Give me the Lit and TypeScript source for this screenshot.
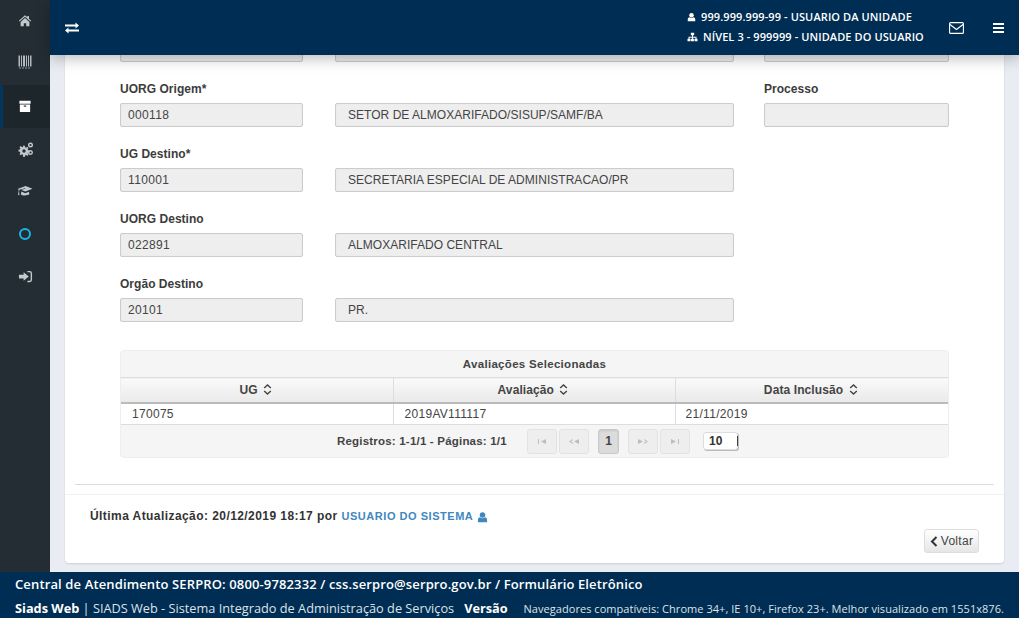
import { LitElement, html, css, svg } from "lit";
import { customElement } from "lit/decorators.js";

const I = {
  home: svg`<path d="M8 1.5 1 7.6l.8.9L8 3.2l6.2 5.3.8-.9-2.5-2.2V2.2h-1.800v1.600zM3 9v5h3.600v-3.400h2.800V14H13V9L8 4.700z"/>`,
  barcode: svg`<path d="M1.500 2.500h1.500v11H1.500zM4 2.500h1v11H4zM6 2.500h2v11H6zM9 2.500h1v11H9zM11 2.500h1v11h-1zM13 2.500h1.500v11H13z" opacity=".9"/><path d="M2 14.500h2v1H2zM5 14.500h2v1H5zM8 14.500h2v1H8zM11 14.500h2v1h-2z" opacity=".7"/>`,
  box: svg`<path d="M1 2h12v3H1zM1.500 6h11v8h-11z"/><rect x="5.700" y="7" width="2.600" height="1.200" fill="#1d262b"/>`,
  gears: svg`<path fill-rule="evenodd" d="M6.200 4.500 7.800 4.800 8 6.200l1.200.5 1.100-.9 1.200 1.200-.9 1.100.5 1.200 1.400.2v1.700l-1.400.2-.5 1.200.9 1.100-1.200 1.200-1.100-.9-1.200.5-.2 1.400H6.200L6 13.800l-1.200-.5-1.100.9-1.200-1.200.9-1.100-.5-1.200-1.400-.2V8.800l1.400-.2.5-1.200-.9-1.100 1.200-1.200 1.100.9L6 6.200zM7 8.300a1.700 1.700 0 1 0 0 3.400 1.700 1.700 0 0 0 0-3.400z"/><path fill-rule="evenodd" d="M13.500 1.500a2.500 2.500 0 1 0 0 5 2.500 2.500 0 0 0 0-5zm0 1.400a1.100 1.100 0 1 1 0 2.200 1.100 1.100 0 0 1 0-2.200zM13.500 9a2.500 2.500 0 1 0 0 5 2.500 2.500 0 0 0 0-5zm0 1.400a1.100 1.100 0 1 1 0 2.200 1.100 1.100 0 0 1 0-2.200z"/>`,
  grad: svg`<path d="M0.500 6 8.500 3l7 2.700-7.200 2.800-4.300-1.700 4.400-1-.2-.5-5.500 1.200-.7 2.300.6 3-1.500.4.400-3.300.3-2.100zM4.300 8.600l4 1.600 3.700-1.400.3 2.500c-1.300 1.200-6.500 1.800-8.300.2z"/>`,
  signin: svg`<path d="M10 2h2.500A2.500 2.500 0 0 1 15 4.500v7a2.500 2.500 0 0 1-2.500 2.500H10v-1.500h2.500a1 1 0 0 0 1-1v-7a1 1 0 0 0-1-1H10z"/><path d="M6 3.500 11.500 8 6 12.500V10H1V6h5z"/>`,
  user: svg`<circle cx="6" cy="3.800" r="3"/><path d="M1 11.800V9.200C1 7.600 2 6.500 3.300 6.300 4 7 5 7.400 6 7.400s2-.4 2.700-1.100C10 6.500 11 7.600 11 9.200v2.600z"/>`,
  net: svg`<path d="M4.500 1h4v3h-1.400v1.800h4.200V8H12.500v3h-3.600V8h1.300V6.900H6.900V8h1.300v3H4.600V8h1.300V6.900H2.800V8H4v3H.5V8h1.200V5.800h4.200V4H4.500z"/>`,
};

const ico = (name: keyof typeof I, w: number, h: number, vb: string) => html`<svg width=${w} height=${h} viewBox=${vb} fill="currentColor">${I[name]}</svg>`;
const sort = html`<svg class="sort" width="9" height="11" viewBox="0 0 9 11" fill="none" stroke="currentColor" stroke-width="1.400"><path d="M1.200 4 4.500 1l3.300 3M1.200 7l3.300 3 3.300-3"/></svg>`;

const rows = [
  { label: "\u00a0", code: "", desc: "", extraLabel: "", extra: true },
  { label: "UORG Origem*", code: "000118", desc: "SETOR DE ALMOXARIFADO/SISUP/SAMF/BA", extraLabel: "Processo", extra: true },
  { label: "UG Destino*", code: "110001", desc: "SECRETARIA ESPECIAL DE ADMINISTRACAO/PR" },
  { label: "UORG Destino", code: "022891", desc: "ALMOXARIFADO CENTRAL" },
  { label: "Orgão Destino", code: "20101", desc: "PR." },
];

@customElement("app-root")
export class AppRoot extends LitElement {
  static styles = css`
    :host { display: block; width: 1019px; height: 618px; overflow: hidden; position: relative; font-family: "Liberation Sans", Arial, sans-serif; color: #333; }
    * { box-sizing: border-box; }
    .top { display: flex; height: 572px; background: #e9edf3; }
    .side { width: 50px; flex: none; background: #232d33; display: flex; flex-direction: column; color: #c3cacf; }
    .si { height: 42.5px; display: flex; align-items: center; justify-content: center; }
    .si.active { background: #1d262b; border-left: 3px solid #003660; padding-right: 3px; color: #fff; }
    .si.circle { color: #19b5e6; }
    .ring { width: 12px; height: 12px; border: 2px solid currentColor; border-radius: 50%; }
    .main { flex: 1; min-width: 0; display: flex; flex-direction: column; position: relative; }
    .head { height: 55px; flex: none; background: #002d53; color: #fff; display: flex; align-items: center; padding: 0 15px; position: relative; z-index: 2; box-shadow: 0 3px 14px rgba(0,0,0,.28); }
    .who { margin-left: auto; font: 600 11px/20px "Open Sans", sans-serif; display: flex; flex-direction: column; letter-spacing: .1px; width: 237px; flex: none; margin-top: -1px; }
    .who div { display: flex; align-items: center; gap: 5px; white-space: nowrap; }
    .mail { margin-left: 25px; margin-right: 29px; display: block; }
    .content { flex: 1; min-height: 0; overflow: hidden; padding: 0 15px; }
    .card { background: #fff; height: 566px; margin-top: -58px; border-radius: 0 0 4px 4px; box-shadow: 0 1px 2px rgba(0,0,0,.12); display: flex; flex-direction: column; }
    .form { display: grid; grid-template-columns: 215px 429px 185px; padding: 0 0 0 55px; grid-auto-rows: 65px; }
    .lab { font-size: 12px; font-weight: 700; line-height: 14px; height: 14px; margin-top: 20px; margin-bottom: 7px; letter-spacing: .03px; color: #3c3c3c; white-space: nowrap; }
    .inp { height: 24px; background: #eee; border: 1px solid #ccc; border-radius: 2px; font-size: 12px; line-height: 22px; padding: 0 7px; color: #444; box-shadow: inset 0 0 1px rgba(0,0,0,.1); }
    .c1 .inp { width: 183px; letter-spacing: .35px; }
    .c2 .inp { width: 399px; padding-left: 12px; letter-spacing: .03px; }
    .c2 .lab { visibility: hidden; }
    .panel { margin: 28px 55px 0; border: 1px solid #eee; border-radius: 4px; background: #f5f5f5; font-size: 12px; }
    .ttl { height: 26px; text-align: center; font-weight: 700; font-size: 11.5px; line-height: 27px; letter-spacing: .3px; color: #444; }
    table { width: 100%; border-collapse: collapse; table-layout: fixed; }
    .col1 { width: 272px; }
    .col2 { width: 282px; }
    th { height: 25px; background: linear-gradient(#fafafa, #e9e9e9); border-top: 1px solid #ddd; border-bottom: 2px solid #bbb; border-left: 1px solid #ddd; font-size: 12px; font-weight: 700; letter-spacing: .1px; color: #444; padding: 0 2px 0 0; }
    th:first-child, td:first-child { border-left: none; }
    .sort { margin-left: 2px; vertical-align: -1px; color: #444; }
    td { height: 22px; background: #fff; border-left: 1px solid #ddd; border-bottom: 1px solid #ddd; padding: 1px 10px 0; font-size: 12px; letter-spacing: .3px; color: #444; }
    td:first-child, td:nth-child(2) { padding-left: 11px; }
    .pager { height: 32px; display: flex; align-items: center; color: #444; font-size: 11.5px; font-weight: 700; }
    .reg { margin-left: 216px; width: 190px; letter-spacing: .2px; white-space: nowrap; }
    .pb { width: 30px; height: 25px; margin-right: 2px; background: #eee; border: 1px solid #e2e2e2; border-radius: 3px; color: #bdbdbd; display: flex; align-items: center; justify-content: center; }
    .pb svg { display: block; }
    .pb.cur { width: 21px; margin: 0 9px 0 7px; background: #dcdcdc; border-color: #c9c9c9; color: #444; font-size: 12px; box-shadow: inset 0 1px 2px rgba(0,0,0,.1); }
    .sel { margin-left: 11px; width: 35px; height: 18px; background: #fff; border: 1px solid #ddd; border-radius: 3px; padding-left: 5px; line-height: 16px; font-size: 12px; color: #333; position: relative; box-shadow: 1px 1px 0 #bbb; }
    .sel::after { content: ""; position: absolute; right: -1px; top: 3px; width: 1px; height: 10px; background: #444; }
    hr { margin: 26px 10px 0; border: 0; border-top: 1px solid #ddd; height: 0; }
    .sep { margin-top: 9px; border-top: 1px solid #f2f2f2; }
    .upd { padding: 14px 25px 0; font-size: 12px; line-height: 15px; font-weight: 700; letter-spacing: .43px; color: #333; display: flex; align-items: center; gap: 4px; }
    .upd a { color: #3f88bf; font-size: 11px; letter-spacing: .53px; }
    .upd svg { color: #3f88bf; }
    .act { display: flex; justify-content: flex-end; padding: 5px 25px 0; }
    .back { width: 55px; height: 24px; background: linear-gradient(#fff, #e6e6e6); border: 1px solid #ddd; border-radius: 3px; font-size: 12px; letter-spacing: .3px; color: #444; display: flex; align-items: center; justify-content: center; gap: 3px; }
    .foot { height: 46px; background: #002d53; color: #fff; font-family: "Open Sans", sans-serif; padding: 3px 15px 0; }
    .f1 { font-size: 13px; font-weight: 600; line-height: 19px; letter-spacing: .13px; height: 19px; }
    .f2 { margin-top: 6px; display: flex; align-items: baseline; font-size: 12.75px; line-height: 17px; white-space: nowrap; }
    .f2 b { font-weight: 700; }
    .f2 .ver { margin-left: 10px; }
    .f2 .thin { font-weight: 400; color: #dde3e8; }
    .f2 .nav { margin-left: auto; font-size: 11px; letter-spacing: .05px; color: #dde3e8; }
  `;

  render() {
    return html`
      <div class="top">
        <nav class="side">
          <div class="si">${ico("home", 14, 14, "0 0 16 16")}</div>
          <div class="si">${ico("barcode", 16, 22, "0 0 16 22")}</div>
          <div class="si active">${ico("box", 14, 14, "0 0 14 15")}</div>
          <div class="si">${ico("gears", 16, 16, "0 0 16 16")}</div>
          <div class="si">${ico("grad", 16, 16, "0 0 16 16")}</div>
          <div class="si circle"><span class="ring"></span></div>
          <div class="si">${ico("signin", 15, 15, "0 0 16 16")}</div>
        </nav>
        <div class="main">
          <header class="head">
            <svg width="14" height="12" viewBox="0 0 14 12" fill="#fff"><path d="M0 2.500h10.500V.5L14 3.500l-3.500 3V4.500H0zM14 7.500H3.500v-2L0 8.500l3.500 3v-2H14z"/></svg>
            <div class="who">
              <div>${ico("user", 9, 10, "0 0 12 12")}<span>999.999.999-99 - USUARIO DA UNIDADE</span></div>
              <div>${ico("net", 11, 10, "0 0 13 12")}<span>NÍVEL 3 - 999999 - UNIDADE DO USUARIO</span></div>
            </div>
            <svg class="mail" width="15" height="12" viewBox="0 0 15 12" fill="none" stroke="#fff" stroke-width="1.100"><rect x=".6" y=".6" width="13.800" height="10.800" rx="1"/><path d="M1 2.500l6.500 5 6.500-5"/></svg>
            <svg width="11" height="10" viewBox="0 0 11 10" fill="#fff"><path d="M0 0h11v2H0zM0 4h11v2H0zM0 8h11v2H0z"/></svg>
          </header>
          <div class="content">
            <div class="card">
              <div class="form">
                ${rows.map((r) => html`
                  <div class="c1"><div class="lab">${r.label}</div><div class="inp">${r.code}</div></div>
                  <div class="c2"><div class="lab">.</div><div class="inp">${r.desc}</div></div>
                  <div class="c3">${r.extra ? html`<div class="lab">${r.extraLabel || "\u00a0"}</div><div class="inp"></div>` : ""}</div>
                `)}
              </div>
              <div class="panel">
                <div class="ttl">Avaliações Selecionadas</div>
                <table>
                  <colgroup><col class="col1" /><col class="col2" /><col /></colgroup>
                  <thead><tr><th>UG ${sort}</th><th>Avaliação ${sort}</th><th>Data Inclusão ${sort}</th></tr></thead>
                  <tbody><tr><td>170075</td><td>2019AV111117</td><td>21/11/2019</td></tr></tbody>
                </table>
                <div class="pager">
                  <span class="reg">Registros: 1-1/1 - Páginas: 1/1</span>
                  <span class="pb"><svg width="8" height="5" viewBox="0 0 8 5" fill="currentColor"><path d="M0 0h1v5H0zM3 2.500 8 0v5z"/></svg></span>
                  <span class="pb"><svg width="10" height="5" viewBox="0 0 10 5" fill="currentColor"><path d="M0 2.500 4 0v1L2 2.500 4 4v1zM5 2.500 10 0v5z"/></svg></span>
                  <span class="pb cur">1</span>
                  <span class="pb"><svg width="10" height="5" viewBox="0 0 10 5" fill="currentColor"><path d="M0 0l5 2.500L0 5zM6 0l4 2.500L6 5V4l2-1.500L6 1z"/></svg></span>
                  <span class="pb"><svg width="8" height="5" viewBox="0 0 8 5" fill="currentColor"><path d="M7 0h1v5H7zM0 0l5 2.500L0 5z"/></svg></span>
                  <span class="sel">10</span>
                </div>
              </div>
              <hr />
              <div class="sep"></div>
              <div class="upd"><span>Última Atualização: 20/12/2019 18:17 por</span> <a>USUARIO DO SISTEMA</a> ${ico("user", 11, 12, "0 0 12 12")}</div>
              <div class="act"><div class="back"><svg width="8" height="11" viewBox="0 0 8 11" fill="none" stroke="#333" stroke-width="2"><path d="M6.500 1 2 5.500 6.500 10"/></svg>Voltar</div></div>
            </div>
          </div>
        </div>
      </div>
      <footer class="foot">
        <div class="f1">Central de Atendimento SERPRO: 0800-9782332 / css.serpro@serpro.gov.br / Formulário Eletrônico</div>
        <div class="f2"><b>Siads Web</b><span class="thin">&nbsp;|&nbsp;SIADS Web - Sistema Integrado de Administração de Serviços</span><b class="ver">Versão</b><span class="nav">Navegadores compatíveis: Chrome 34+, IE 10+, Firefox 23+. Melhor visualizado em 1551x876.</span></div>
      </footer>
    `;
  }
}
